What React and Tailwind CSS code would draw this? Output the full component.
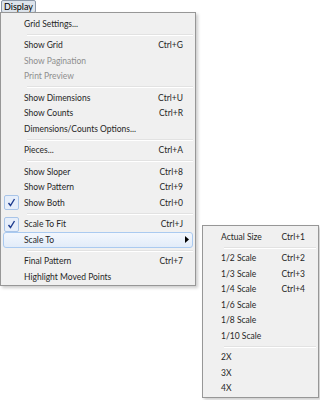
import React from 'react';

const FONT = { fontFamily: 'Lato, "Open Sans", sans-serif' };

const MAIN = [
  { label: 'Grid Settings...' },
  'sep',
  { label: 'Show Grid', key: 'Ctrl+G' },
  { label: 'Show Pagination', disabled: true },
  { label: 'Print Preview', disabled: true },
  'sep',
  { label: 'Show Dimensions', key: 'Ctrl+U' },
  { label: 'Show Counts', key: 'Ctrl+R' },
  { label: 'Dimensions/Counts Options...' },
  'sep',
  { label: 'Pieces...', key: 'Ctrl+A' },
  'sep',
  { label: 'Show Sloper', key: 'Ctrl+8' },
  { label: 'Show Pattern', key: 'Ctrl+9' },
  { label: 'Show Both', key: 'Ctrl+0', checked: true },
  'sep',
  { label: 'Scale To Fit', key: 'Ctrl+J', checked: true },
  { label: 'Scale To', sub: true, active: true },
  'sep',
  { label: 'Final Pattern', key: 'Ctrl+7' },
  { label: 'Highlight Moved Points' },
];

const SUB = [
  { label: 'Actual Size', key: 'Ctrl+1' },
  'sep',
  { label: '1/2 Scale', key: 'Ctrl+2' },
  { label: '1/3 Scale', key: 'Ctrl+3' },
  { label: '1/4 Scale', key: 'Ctrl+4' },
  { label: '1/6 Scale' },
  { label: '1/8 Scale' },
  { label: '1/10 Scale' },
  'sep',
  { label: '2X' },
  { label: '3X' },
  { label: '4X' },
];

function Check() {
  return (
    <div className="w-[15px] h-[15px] flex items-center justify-center rounded-[2px] border border-[#a8c4e8] bg-[#e6eefa]">
      <svg width="9" height="9" viewBox="0 0 9 9">
        <path d="M1.5 5 L3.5 7.5 L7.5 1" fill="none" stroke="#1d3b8f" strokeWidth="1.4" />
      </svg>
    </div>
  );
}

function Row({ item, gutter, keyRight }) {
  if (item === 'sep') {
    return (
      <div className="h-[6px] flex flex-col justify-center" style={{ paddingLeft: gutter }}>
        <div className="h-px bg-[#e2e2e2]" />
        <div className="h-px bg-white" />
      </div>
    );
  }
  return (
    <div
      className={`h-[15.5px] flex items-center rounded-[3px] border ${
        item.active
          ? 'border-[#aacaf0] bg-gradient-to-b from-[#f3f7fd] to-[#e2ecf9]'
          : 'border-transparent'
      } ${item.disabled ? 'text-[#8e8e8e]' : 'text-[#262626]'}`}
    >
      <div className="shrink-0 flex items-center" style={{ width: gutter - 4 }}>
        {item.checked && <Check />}
      </div>
      <span className="flex-1 whitespace-nowrap">{item.label}</span>
      {item.key && <span className="whitespace-nowrap" style={{ marginRight: keyRight }}>{item.key}</span>}
      {item.sub && (
        <svg width="4" height="7" viewBox="0 0 4 7" className="mr-[3px]">
          <path d="M0 0 L4 3.5 L0 7 Z" fill="#000" />
        </svg>
      )}
    </div>
  );
}

export default function App() {
  return (
    <div className="relative w-[320px] h-[400px] bg-white overflow-hidden text-[8.5px] leading-none" style={FONT}>
      <div className="h-[12px] pl-[1px]">
        <div className="w-[35px] h-[13px] flex items-center justify-center rounded-[2px] border border-[#8c98a8] bg-[#dde4ec] text-black text-[9px]">
          Display
        </div>
      </div>

      <div className="w-[196px] border border-[#979797] bg-[#f0f0f0] px-[2px] pt-[3px] shadow-[2px_2px_3px_rgba(0,0,0,0.2)]">
        {MAIN.map((it, i) => (
          <Row key={i} item={it} gutter={24} keyRight={9} />
        ))}
      </div>

      <div className="absolute left-[202px] top-[225px] w-[117px] border border-[#979797] bg-[#f0f0f0] px-[2px] pt-[3px] pb-[1px] shadow-[2px_2px_3px_rgba(0,0,0,0.2)]">
        {SUB.map((it, i) => (
          <Row key={i} item={it} gutter={19} keyRight={10} />
        ))}
      </div>
    </div>
  );
}
